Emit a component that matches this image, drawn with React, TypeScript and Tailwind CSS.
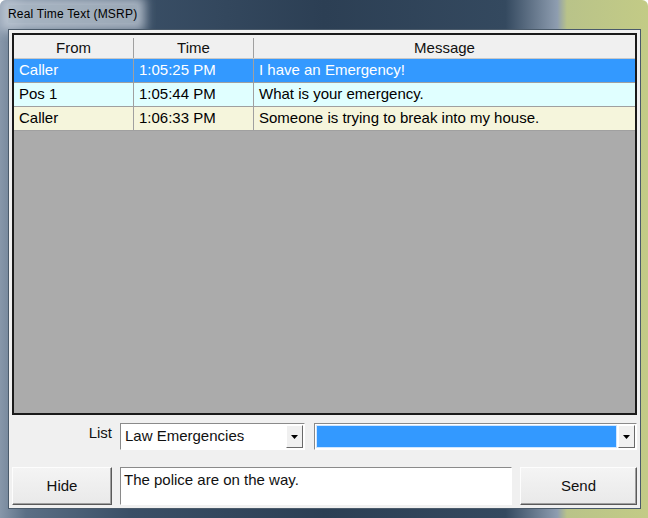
import type { ReactNode } from 'react'

const ROWS = [
  { from: 'Caller', time: '1:05:25 PM', msg: 'I have an Emergency!', row: 'bg-[#3399ff] text-white' },
  { from: 'Pos 1', time: '1:05:44 PM', msg: 'What is your emergency.', row: 'bg-[#e0ffff] text-black' },
  { from: 'Caller', time: '1:06:33 PM', msg: 'Someone is trying to break into my house.', row: 'bg-[#f5f5dc] text-black' },
]

function DropArrow() {
  return (
    <div className="flex h-full w-[17px] shrink-0 items-center justify-center border border-t-white border-l-white border-b-[#696969] border-r-[#696969] bg-[#f0f0f0]">
      <svg width="7" height="4" viewBox="0 0 7 4">
        <path d="M0 0h7L3.5 4z" fill="#000" />
      </svg>
    </div>
  )
}

function WinButton({ children, className }: { children: ReactNode; className: string }) {
  return (
    <button
      type="button"
      className={`flex h-[38px] items-center justify-center border border-t-[#fdfdfd] border-l-[#fdfdfd] border-b-[#5a5a5a] border-r-[#5a5a5a] bg-[linear-gradient(#f4f4f4,#e9e9e9)] pt-[1px] text-[15px] text-[#111] shadow-[inset_-1px_-1px_0_#a0a0a0] ${className}`}
    >
      {children}
    </button>
  )
}

export default function App() {
  return (
    <div className="flex h-[518px] w-[648px] flex-col overflow-hidden rounded-t-[6px] bg-[linear-gradient(90deg,#8797aa_0%,#5b6f85_4%,#3a4f66_20%,#2c3f54_50%,#34495f_78%,#8e9db0_86%,#b9c389_87.5%,#c3cb86_100%)] font-['Liberation_Sans',Arial,sans-serif]">
      {/* title bar */}
      <div className="flex h-[29px] shrink-0 items-center px-[8px] pb-[1px]">
        <span className="bg-[#c6d0da]/70 text-[12px] tracking-[0.2px] text-black shadow-[0_0_10px_8px_rgba(205,214,224,0.75)]">
          Real Time Text (MSRP)
        </span>
      </div>

      {/* client area */}
      <div className="mx-[8px] mr-[7px] mb-[9px] flex flex-1 flex-col border border-[#4a5a6a] bg-[#f0f0f0] px-[3px] pt-[3px] pb-[2px]">
        {/* grid */}
        <div className="flex h-[382px] flex-col border-2 border-[#1a1a1a] bg-[#ababab] text-[15px]">
          <div className="flex h-[24px] shrink-0 items-center border-b border-[#c8c8c8] bg-[#f0f0f0] pt-[3px] text-[#111]">
            <div className="flex h-full w-[120px] items-center justify-center border-r border-[#a0a0a0]">From</div>
            <div className="flex h-full w-[120px] items-center justify-center border-r border-[#a0a0a0]">Time</div>
            <div className="flex h-full flex-1 items-center justify-center">Message</div>
          </div>
          {ROWS.map((r) => (
            <div key={r.time} className={`flex h-[24px] shrink-0 items-center border-b border-[#a0a0a0] ${r.row}`}>
              <div className="flex h-full w-[120px] items-center border-r border-[#a0a0a0] pl-[5px]">{r.from}</div>
              <div className="flex h-full w-[120px] items-center border-r border-[#a0a0a0] pl-[5px]">{r.time}</div>
              <div className="flex h-full flex-1 items-center pl-[5px]">{r.msg}</div>
            </div>
          ))}
        </div>

        {/* list row */}
        <div className="mt-[8px] flex h-[27px] items-start">
          <div className="w-[100px] pt-[1px] text-right text-[15px] leading-[17px] text-[#111]">List</div>
          <div className="ml-[8px] flex h-[27px] w-[185px] items-center border border-t-[#8a8a8a] border-l-[#8a8a8a] border-b-white border-r-white bg-white p-[1px]">
            <span className="flex-1 pl-[3px] text-[15px] text-[#111]">Law Emergencies</span>
            <DropArrow />
          </div>
          <div className="ml-[9px] flex h-[27px] flex-1 items-center border border-t-[#8a8a8a] border-l-[#8a8a8a] border-b-white border-r-white bg-white p-[1px]">
            <div className="mr-[1px] h-full flex-1 border border-[#cfe6ff] bg-[#3399ff]" />
            <DropArrow />
          </div>
        </div>

        {/* send row */}
        <div className="mt-[17px] flex items-start gap-[8px]">
          <WinButton className="w-[100px]">Hide</WinButton>
          <div className="h-[38px] flex-1 border border-t-[#8a8a8a] border-l-[#8a8a8a] border-b-white border-r-white bg-white px-[3px] pt-[3px] text-[15px] leading-[17px] text-[#111]">
            The police are on the way.
          </div>
          <WinButton className="w-[117px]">Send</WinButton>
        </div>
      </div>
    </div>
  )
}
